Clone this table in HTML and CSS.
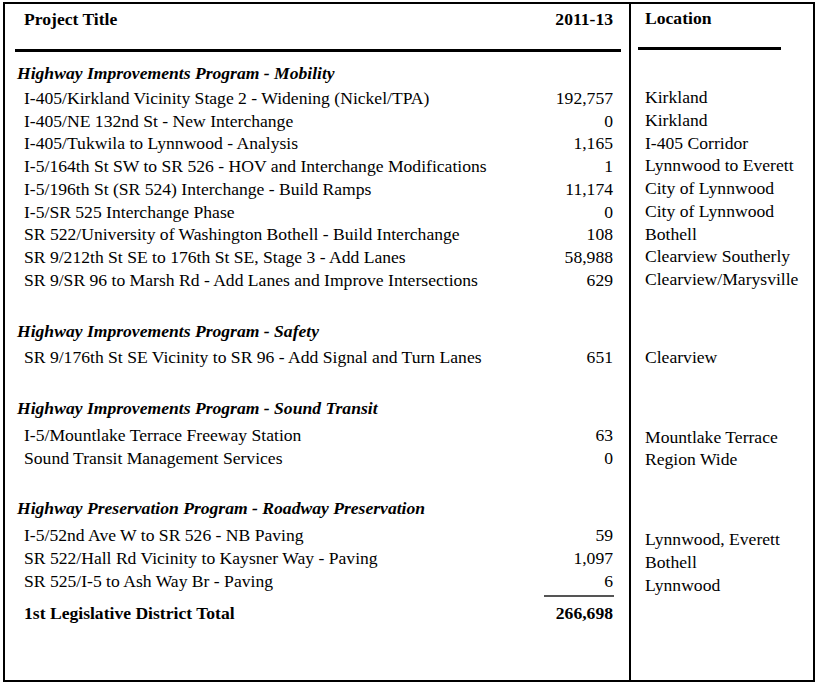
FILE: index.html
```html
<!DOCTYPE html>
<html lang="en">
<head>
<meta charset="utf-8">
<title>1st Legislative District Projects</title>
<link rel="stylesheet" href="styles.css">
</head>
<body>
<div class="sheet">
  <div class="main">
    <div class="head">
      <span class="head-title">Project Title</span>
      <span class="head-amt">2011-13</span>
    </div>
    <div class="rule"></div>

    <section class="group group-first">
      <h2 class="group-title">Highway Improvements Program - Mobility</h2>
      <div class="row"><span>I-405/Kirkland Vicinity Stage 2 - Widening (Nickel/TPA)</span><span class="amt">192,757</span></div>
      <div class="row"><span>I-405/NE 132nd St - New Interchange</span><span class="amt">0</span></div>
      <div class="row"><span>I-405/Tukwila to Lynnwood - Analysis</span><span class="amt">1,165</span></div>
      <div class="row"><span>I-5/164th St SW to SR 526 - HOV and Interchange Modifications</span><span class="amt">1</span></div>
      <div class="row"><span>I-5/196th St (SR 524) Interchange - Build Ramps</span><span class="amt">11,174</span></div>
      <div class="row"><span>I-5/SR 525 Interchange Phase</span><span class="amt">0</span></div>
      <div class="row"><span>SR 522/University of Washington Bothell - Build Interchange</span><span class="amt">108</span></div>
      <div class="row"><span>SR 9/212th St SE to 176th St SE, Stage 3 - Add Lanes</span><span class="amt">58,988</span></div>
      <div class="row"><span>SR 9/SR 96 to Marsh Rd - Add Lanes and Improve Intersections</span><span class="amt">629</span></div>
    </section>

    <section class="group">
      <h2 class="group-title">Highway Improvements Program - Safety</h2>
      <div class="row"><span>SR 9/176th St SE Vicinity to SR 96 - Add Signal and Turn Lanes</span><span class="amt">651</span></div>
    </section>

    <section class="group">
      <h2 class="group-title">Highway Improvements Program - Sound Transit</h2>
      <div class="row"><span>I-5/Mountlake Terrace Freeway Station</span><span class="amt">63</span></div>
      <div class="row"><span>Sound Transit Management Services</span><span class="amt">0</span></div>
    </section>

    <section class="group">
      <h2 class="group-title">Highway Preservation Program - Roadway Preservation</h2>
      <div class="row"><span>I-5/52nd Ave W to SR 526 - NB Paving</span><span class="amt">59</span></div>
      <div class="row"><span>SR 522/Hall Rd Vicinity to Kaysner Way - Paving</span><span class="amt">1,097</span></div>
      <div class="row"><span>SR 525/I-5 to Ash Way Br - Paving</span><span class="amt">6</span></div>
    </section>

    <div class="sum-rule-wrap"><div class="sum-rule"></div></div>
    <div class="row total"><span>1st Legislative District Total</span><span class="amt">266,698</span></div>
  </div>

  <div class="loc">
    <div class="loc-head">Location</div>
    <div class="loc-rule"></div>

    <div class="loc-group loc-group-first">
      <div class="loc-row">Kirkland</div>
      <div class="loc-row">Kirkland</div>
      <div class="loc-row">I-405 Corridor</div>
      <div class="loc-row">Lynnwood to Everett</div>
      <div class="loc-row">City of Lynnwood</div>
      <div class="loc-row">City of Lynnwood</div>
      <div class="loc-row">Bothell</div>
      <div class="loc-row">Clearview Southerly</div>
      <div class="loc-row">Clearview/Marysville</div>
    </div>
    <div class="loc-group">
      <div class="loc-row">Clearview</div>
    </div>
    <div class="loc-group loc-group-low">
      <div class="loc-row">Mountlake Terrace</div>
      <div class="loc-row">Region Wide</div>
    </div>
    <div class="loc-group loc-group-low">
      <div class="loc-row">Lynnwood, Everett</div>
      <div class="loc-row">Bothell</div>
      <div class="loc-row">Lynnwood</div>
    </div>
  </div>
</div>
</body>
</html>
```

FILE: styles.css
```css
* {
  box-sizing: border-box;
}

html, body {
  margin: 0;
  padding: 0;
  background: #ffffff;
}

body {
  font-family: "Liberation Serif", "Times New Roman", serif;
  font-size: 17.6px;
  color: #000000;
}

.sheet {
  margin: 2px 0 0 3px;
  width: 812px;
  height: 680px;
  border: 2px solid #000000;
  display: flex;
}

.main {
  width: 624px;
  flex: none;
}

.head {
  display: flex;
  justify-content: space-between;
  padding: 4px 16px 0 19px;
  line-height: 22px;
  font-weight: bold;
}

.rule {
  margin: 19px 8px 0 10px;
  height: 3px;
  background: #000000;
}

.group {
  margin-top: 28px;
}

.group-first {
  margin-top: 10px;
}

.group-title {
  margin: 0 0 4px 0;
  padding-left: 12px;
  font-size: 17.6px;
  font-weight: bold;
  font-style: italic;
  line-height: 22.75px;
}

.group-first .group-title {
  margin-bottom: 2px;
}

.row {
  display: flex;
  justify-content: space-between;
  padding: 0 16px 0 19px;
  line-height: 22.75px;
  white-space: nowrap;
}

.amt {
  text-align: right;
}

.sum-rule-wrap {
  display: flex;
  justify-content: flex-end;
  padding-right: 15px;
  margin-top: 3px;
}

.sum-rule {
  width: 70px;
  height: 2px;
  background: #555555;
}

.total {
  margin-top: 5px;
  font-weight: bold;
}

.loc {
  flex: 1;
  border-left: 2px solid #000000;
}

.loc-head {
  padding: 3px 0 0 14px;
  line-height: 22px;
  font-weight: bold;
}

.loc-rule {
  margin: 18px 0 0 7px;
  width: 143px;
  height: 3px;
  background: #000000;
}

.loc-group {
  margin-top: 55px;
}

.loc-group-first {
  margin-top: 36px;
}

.loc-group-low {
  margin-top: 57px;
}

.loc-row {
  padding-left: 14px;
  line-height: 22.75px;
  white-space: nowrap;
}
```
